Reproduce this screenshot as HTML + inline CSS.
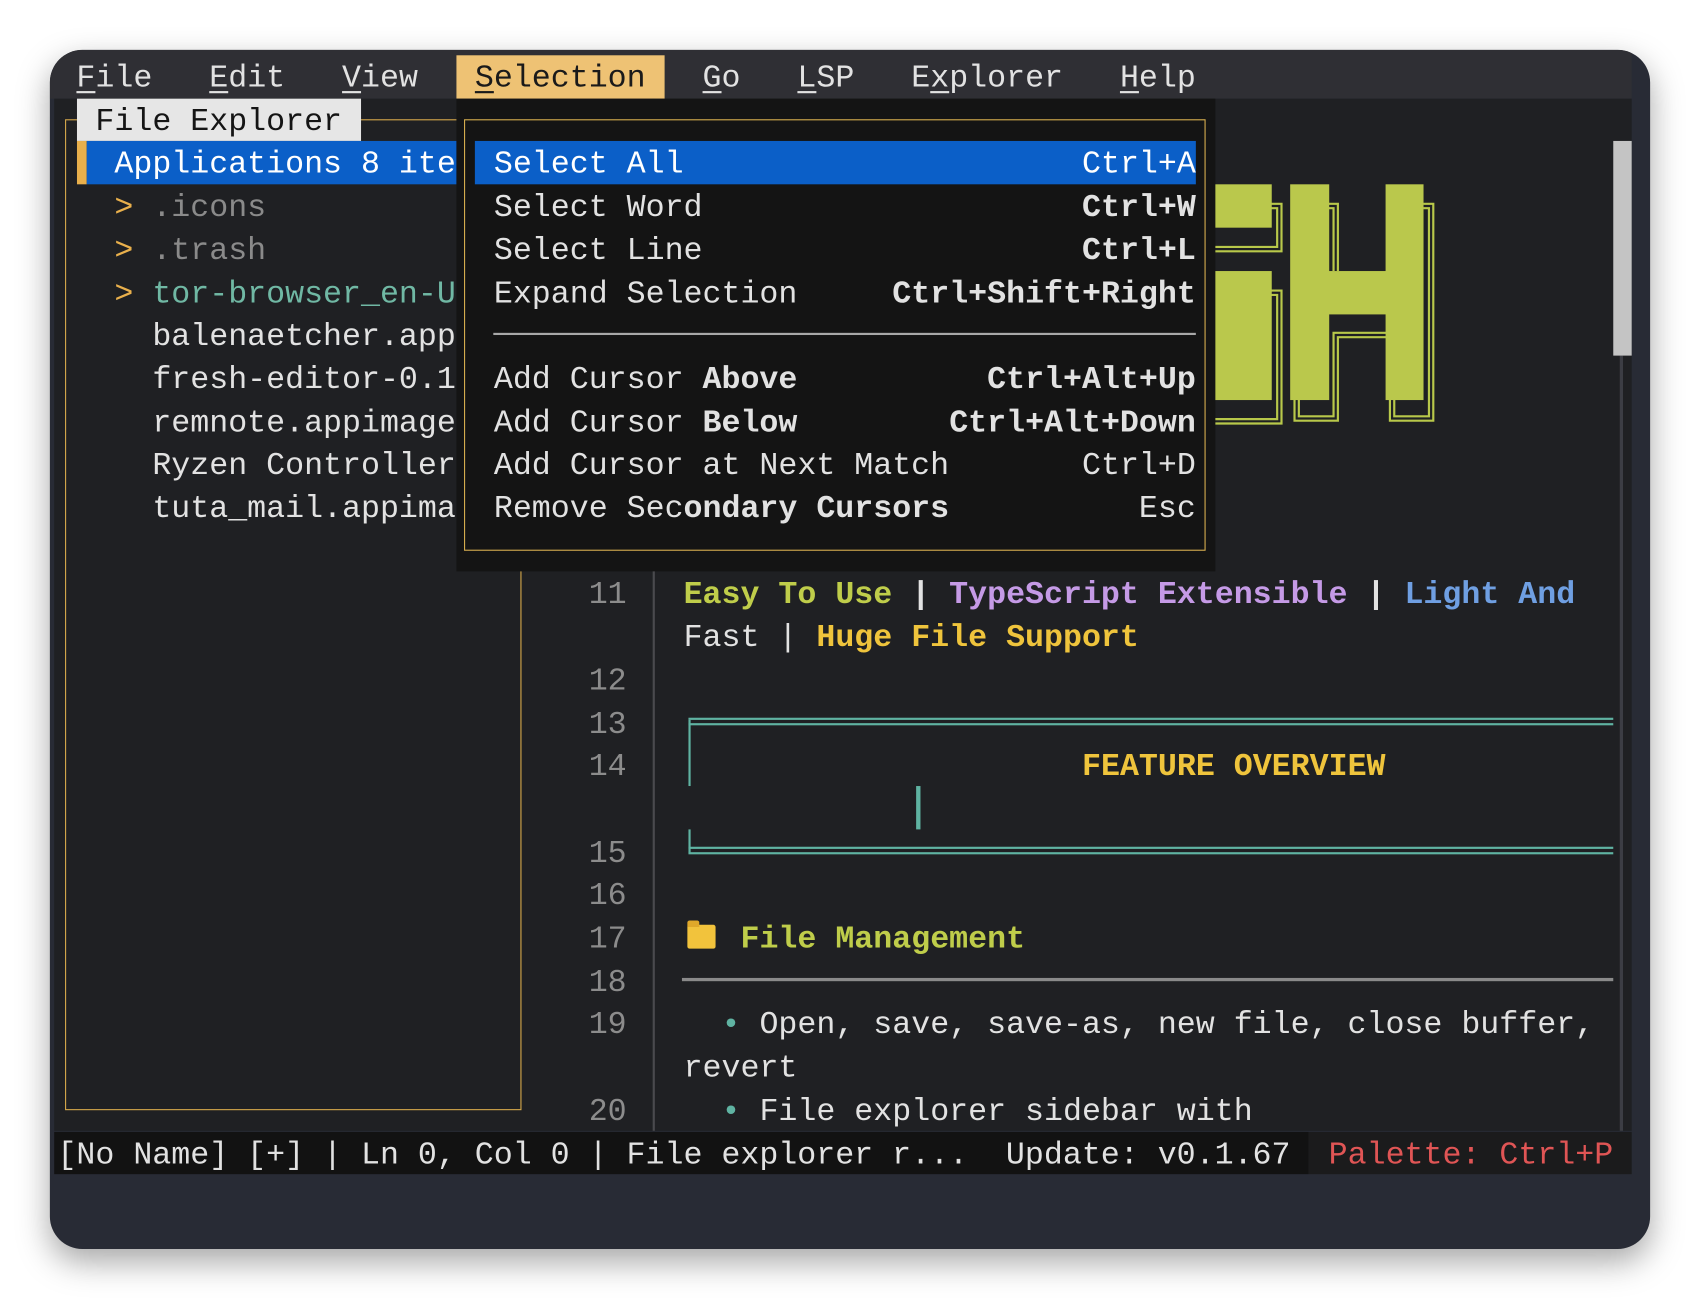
<!DOCTYPE html>
<html><head><meta charset="utf-8">
<style>
html,body{margin:0;padding:0;background:#fff;width:1700px;height:1300px;overflow:hidden}
#s{position:absolute;left:0;top:0;width:1568px;height:1200px;transform:scale(1.08418);transform-origin:0 0}
.a{position:absolute}
.t{position:absolute;white-space:pre;height:39.7px;line-height:39.7px;margin-top:2px;font-family:"Liberation Mono","DejaVu Sans Mono",monospace;font-size:29.17px;color:#e2e2e2}
.b{font-weight:bold}
.u{text-decoration:underline;text-underline-offset:4px}
.n{color:#8c8c8c}
</style></head><body>
<div id="s">
<div class="a" style="left:46px;top:46px;width:1476px;height:1106px;border-radius:30px;background:#282b35;box-shadow:0 12px 30px rgba(0,0,0,.35);overflow:hidden">
  <div class="a" style="left:0;top:0;width:1459px;height:45px;background:#2f2f34"></div>
  <div class="a" style="left:4px;top:45px;width:1455px;height:952px;background:#1f2023"></div>
</div>

<div class="a" style="left:420.5px;top:51px;width:192.5px;height:39.7px;background:#eec274"></div>
<span class="t" style="left:70.5px;top:51px"><span class="u">F</span>ile</span>
<span class="t" style="left:193px;top:51px"><span class="u">E</span>dit</span>
<span class="t" style="left:315.5px;top:51px"><span class="u">V</span>iew</span>
<span class="t" style="left:438px;top:51px;color:#1a1a1a"><span class="u">S</span>election</span>
<span class="t" style="left:648px;top:51px"><span class="u">G</span>o</span>
<span class="t" style="left:735.5px;top:51px"><span class="u">L</span>SP</span>
<span class="t" style="left:840.5px;top:51px">E<span class="u">x</span>plorer</span>
<span class="t" style="left:1033px;top:51px"><span class="u">H</span>elp</span>

<div class="a" style="left:60px;top:110px;width:419px;height:912px;border:1.5px solid #d9ab4c"></div>
<div class="a" style="left:70.5px;top:90.7px;width:262.5px;height:39.7px;background:#e6e6e6"></div>
<span class="t" style="left:88px;top:90.7px;color:#151515">File Explorer</span>
<div class="a" style="left:70.5px;top:130.4px;width:9px;height:39.7px;background:#e9b04c"></div>
<div class="a" style="left:79.5px;top:130.4px;width:341px;height:39.7px;background:#0b5fc8"></div>
<span class="t" style="left:105.5px;top:130.4px;color:#fff">Applications 8 ite</span>
<span class="t" style="left:105.5px;top:170.1px;color:#e9b04c">&gt;</span><span class="t" style="left:140.5px;top:170.1px;color:#8a8a8a">.icons</span>
<span class="t" style="left:105.5px;top:209.8px;color:#e9b04c">&gt;</span><span class="t" style="left:140.5px;top:209.8px;color:#8a8a8a">.trash</span>
<span class="t" style="left:105.5px;top:249.5px;color:#e9b04c">&gt;</span><span class="t" style="left:140.5px;top:249.5px;color:#70b8a4">tor-browser_en-U</span>
<span class="t" style="left:140.5px;top:289.2px">balenaetcher.app</span>
<span class="t" style="left:140.5px;top:328.9px">fresh-editor-0.1</span>
<span class="t" style="left:140.5px;top:368.6px">remnote.appimage</span>
<span class="t" style="left:140.5px;top:408.3px">Ryzen Controller</span>
<span class="t" style="left:140.5px;top:448px">tuta_mail.appima</span>

<div class="a" style="left:602px;top:91px;width:2px;height:952px;background:#4a4a4e"></div>
<div class="a" style="left:1494px;top:328px;width:3px;height:715px;background:#3c3d44"></div>
<div class="a" style="left:1488px;top:130px;width:17px;height:198px;background:#c4c4c4"></div>

<svg class="a" style="left:0;top:0" width="1568" height="1200">
 <g fill="none" stroke-linejoin="miter">
  <path d="M1118 229.8H1180V190H1172 M1118 388.6H1180V270H1172 M1118 309H1126 M1196 368H1196V386H1232V309H1284V386H1320V190H1313 M1225 190H1232V250" stroke="#b8c84a" stroke-width="6"/>
  <path d="M1118 229.8H1180V190H1172 M1118 388.6H1180V270H1172 M1118 309H1126 M1196 368H1196V386H1232V309H1284V386H1320V190H1313 M1225 190H1232V250" stroke="#1f2023" stroke-width="2"/>
 </g>
 <g fill="#bac84c">
  <rect x="1120" y="170" width="53" height="40"/>
  <rect x="1120" y="250" width="53" height="119"/>
  <rect x="1190" y="170" width="36" height="199"/>
  <rect x="1225" y="250" width="54" height="40"/>
  <rect x="1278" y="170" width="35" height="199"/>
 </g>
</svg>

<div class="a" style="left:420.5px;top:90.7px;width:700px;height:436.7px;background:#141414"></div>
<div class="a" style="left:428px;top:110px;width:682px;height:396px;border:1.5px solid #d9b050"></div>
<div class="a" style="left:438px;top:130.4px;width:665px;height:39.7px;background:#0b5fc8"></div>
<span class="t" style="left:455.5px;top:130.4px;color:#fff">Select All</span><span class="t" style="left:998px;top:130.4px;color:#fff">Ctrl+A</span>
<span class="t" style="left:455.5px;top:170.1px">Select Word</span><span class="t b" style="left:998px;top:170.1px">Ctrl+W</span>
<span class="t" style="left:455.5px;top:209.8px">Select Line</span><span class="t b" style="left:998px;top:209.8px">Ctrl+L</span>
<span class="t" style="left:455.5px;top:249.5px">Expand Selection</span><span class="t b" style="left:823px;top:249.5px">Ctrl+Shift+Right</span>
<div class="a" style="left:455px;top:307px;width:648px;height:2px;background:#a8a8a8"></div>
<span class="t" style="left:455.5px;top:328.9px">Add Cursor <b>Above</b></span><span class="t b" style="left:910.5px;top:328.9px">Ctrl+Alt+Up</span>
<span class="t" style="left:455.5px;top:368.6px">Add Cursor <b>Below</b></span><span class="t b" style="left:875.5px;top:368.6px">Ctrl+Alt+Down</span>
<span class="t" style="left:455.5px;top:408.3px">Add Cursor at Next Match</span><span class="t" style="left:998px;top:408.3px">Ctrl+D</span>
<span class="t" style="left:455.5px;top:448px">Remove Sec<b>ondary Cursors</b></span><span class="t" style="left:1050.5px;top:448px">Esc</span>

<span class="t n" style="left:543px;top:527.4px">11</span>
<span class="t b" style="left:630.5px;top:527.4px"><span style="color:#bfcd4a">Easy To Use</span> | <span style="color:#c59ae6">TypeScript Extensible</span> | <span style="color:#6f9fe2">Light And</span></span>
<span class="t" style="left:630.5px;top:567.1px">Fast | <b style="color:#efc43c">Huge File Support</b></span>
<span class="t n" style="left:543px;top:606.8px">12</span>
<span class="t n" style="left:543px;top:646.5px">13</span>
<span class="t n" style="left:543px;top:686.2px">14</span>
<span class="t n" style="left:543px;top:765.6px">15</span>
<span class="t n" style="left:543px;top:805.3px">16</span>
<span class="t n" style="left:543px;top:845px">17</span>
<span class="t n" style="left:543px;top:884.7px">18</span>
<span class="t n" style="left:543px;top:924.4px">19</span>
<span class="t n" style="left:543px;top:1003.8px">20</span>

<div class="a" style="left:635px;top:662px;width:853px;height:3px;border-top:2px solid #5fb3a2;border-bottom:2px solid #5fb3a2"></div>
<div class="a" style="left:635px;top:664px;width:3px;height:61px;border-left:2px solid #5fb3a2"></div>
<div class="a" style="left:635px;top:765px;width:3px;height:22px;border-left:2px solid #5fb3a2"></div>
<div class="a" style="left:635px;top:781px;width:853px;height:3px;border-top:2px solid #5fb3a2;border-bottom:2px solid #5fb3a2"></div>
<div class="a" style="left:845px;top:725px;width:4px;height:40px;background:#5fb3a2"></div>
<span class="t b" style="left:998px;top:686.2px;color:#efc43c">FEATURE OVERVIEW</span>

<div class="a" style="left:634px;top:853px;width:26px;height:22px;background:#f2c33c;border-radius:2px"></div>
<div class="a" style="left:634px;top:849px;width:11px;height:6px;background:#e0a82a;border-radius:2px 2px 0 0"></div>
<span class="t b" style="left:683px;top:845px;color:#bfcd4a">File Management</span>
<div class="a" style="left:629px;top:902px;width:859px;height:3px;background:#8a8a8a"></div>
<span class="t" style="left:665.5px;top:924.4px"><span style="color:#5fb3a2">•</span> Open, save, save-as, new file, close buffer,</span>
<span class="t" style="left:630.5px;top:964.1px">revert</span>
<span class="t" style="left:665.5px;top:1003.8px"><span style="color:#5fb3a2">•</span> File explorer sidebar with</span>

<div class="a" style="left:50px;top:1043.5px;width:1157px;height:39.7px;background:#121212"></div>
<div class="a" style="left:1207px;top:1043.5px;width:298px;height:39.7px;background:#1b1b1c"></div>
<span class="t" style="left:53px;top:1043.5px">[No Name] [+] | Ln 0, Col 0 | File explorer r...  Update: v0.1.67</span>
<span class="t" style="left:1225.5px;top:1043.5px;color:#e05555">Palette: Ctrl+P</span>
</div>
</body></html>
